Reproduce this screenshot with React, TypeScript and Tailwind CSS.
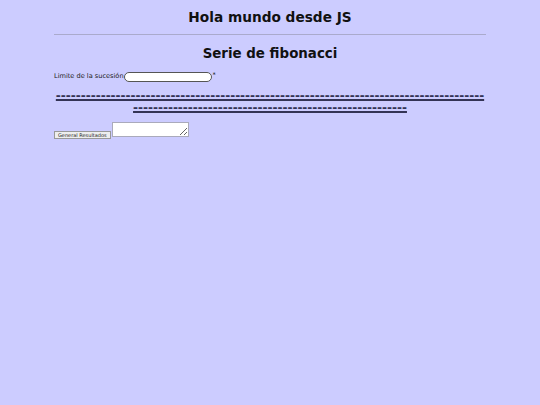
import React from 'react';

const dashes = (n: number) => '-'.repeat(n);

export default function App() {
  return (
    <div className="min-h-[405px] w-full bg-[#ccccff] text-[#111] px-[54px] pt-[8px]" style={{ fontFamily: '"DejaVu Sans", Verdana, sans-serif' }}>
      <h1 className="text-center text-[13.7px] font-bold leading-[18px]">Hola mundo desde JS</h1>
      <hr className="mt-[8px] border-0 border-t border-[#aaaacc]" />
      <h2 className="mt-[10px] text-center text-[13.4px] font-bold leading-[18px]">Serie de fibonacci</h2>

      <div className="mt-[9px] flex items-center text-[6.6px] text-[#222]">
        <label>Limite de la sucesión</label>
        <input type="text" className="h-[10px] w-[88px] rounded-full border border-[#555] bg-white outline-none" />
        <span className="ml-[1px] -mt-[3px]">*</span>
      </div>

      <div className="mt-[8px] text-center text-[12px] font-bold leading-[12px] text-[#333355] underline decoration-[1.5px] underline-offset-[-1px]">
        {dashes(86)}
        <br />
        {dashes(55)}
      </div>

      <div className="mt-[8px] flex items-start gap-[1px]">
        <button className="mt-[9px] h-[8px] border border-[#999] bg-[#eeeeee] px-[3px] text-[5px] leading-[6px] text-[#222]">General Resultados</button>
        <textarea className="h-[15px] w-[77px] border border-[#aaaabb] bg-white outline-none" />
      </div>
    </div>
  );
}
